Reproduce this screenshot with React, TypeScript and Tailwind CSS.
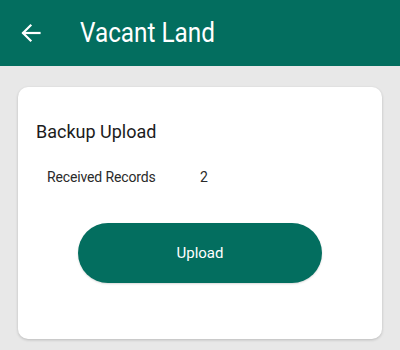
import React from "react";

export default function App() {
  return (
    <div className="w-[400px] h-[350px] bg-[#e8e8e8] overflow-hidden" style={{ fontFamily: "Roboto, 'Liberation Sans', sans-serif" }}>
      <div className="h-[66px] bg-[#036e5f] flex items-center">
        <div className="w-[80px] pl-[19px] flex items-center">
          <svg width="24" height="24" viewBox="0 0 24 24" fill="none" stroke="white" strokeWidth="2.2" strokeLinecap="square">
            <path d="M20.5 12H4.5" />
            <path d="M11.5 4.5L4 12l7.5 7.5" />
          </svg>
        </div>
        <div className="text-white text-[27px] leading-none mt-[1px] origin-left scale-x-[0.9] whitespace-nowrap">Vacant Land</div>
      </div>
      <div className="px-[18px] pt-[21px]">
        <div className="bg-white rounded-[10px] shadow-[0_1px_3px_rgba(0,0,0,0.2)] h-[252px] pt-[36px]">
          <div className="pl-[18px] text-[18px] leading-none text-[#1c1c1c]">Backup Upload</div>
          <div className="flex pl-[29px] mt-[29px] text-[14px] leading-none text-[#2a2a2a] tracking-[-0.01em]">
            <div className="w-[153px]">Received Records</div>
            <div>2</div>
          </div>
          <div className="flex justify-center mt-[39px]">
            <div className="w-[244px] h-[60px] rounded-full bg-[#036e5f] text-white text-[15px] flex items-center justify-center shadow-[0_1px_2px_rgba(0,0,0,0.15)]">
              Upload
            </div>
          </div>
        </div>
      </div>
    </div>
  );
}
